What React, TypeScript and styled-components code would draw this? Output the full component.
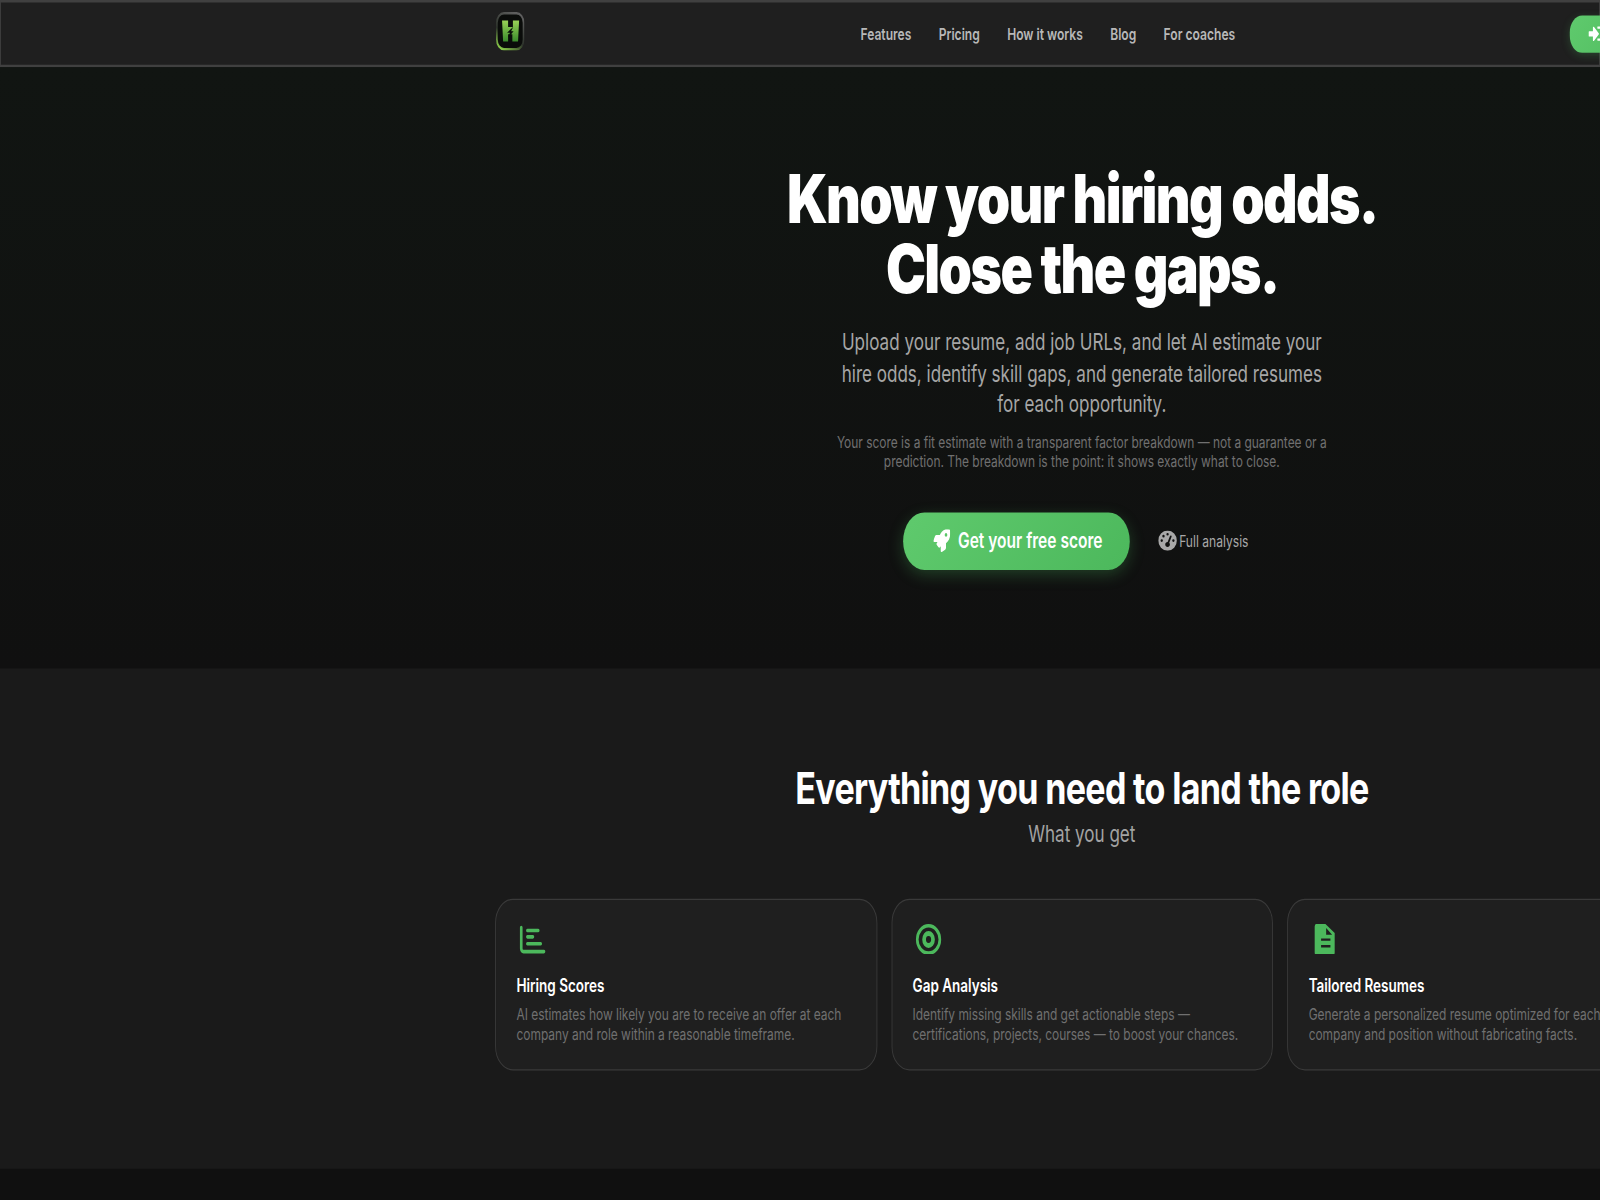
import React from "react";
import styled, { createGlobalStyle } from "styled-components";
import { FaRocket, FaSignInAlt } from "react-icons/fa";
import { FaGaugeHigh } from "react-icons/fa6";

const Global = createGlobalStyle`
  html, body { margin: 0; padding: 0; width: 100%; height: 100%; overflow: hidden; background: #101010; }
  * { box-sizing: border-box; }
`;

/* The reference is a 1800x1000 page non-uniformly resampled to 1600x1200. */
const Page = styled.div`
  width: 1800px;
  height: 1000px;
  overflow: hidden;
  transform: scale(0.8889, 1.2);
  transform-origin: 0 0;
  font-family: Inter, "Liberation Sans", sans-serif;
  background: #101010;
`;

const Nav = styled.header`
  height: 56px;
  background: #1f1f1f;
  border-style: solid;
  border-color: #404040;
  border-width: 2px 1px;
  display: flex;
  align-items: center;
  padding-left: 557px;
`;
const Logo = styled.svg`
  width: 32px;
  height: 32px;
  flex: none;
  margin-top: -4px;
`;
const NavLinks = styled.nav`
  display: flex;
  gap: 30.8px;
  margin: 0 0 1px 378px;
`;
const NavLink = styled.a`
  font-size: 13.6px;
  font-weight: 600;
  color: #b8b8b8;
  white-space: nowrap;
`;
const LoginButton = styled.button`
  flex: none;
  width: 120px;
  height: 31px;
  margin-left: 376px;
  border: 0;
  border-radius: 14px;
  background: linear-gradient(135deg, #5fca6d, #4cb85c);
  box-shadow: 0 2px 8px rgba(76, 184, 92, 0.25);
  color: #fff;
  display: flex;
  align-items: center;
  padding: 0 0 0 21px;
  font-size: 16px;
`;

const Hero = styled.section`
  height: 501px;
  background: linear-gradient(180deg, #111512 0%, #101010 100%);
  padding: 81px 0 0 558px;
`;
const Column = styled.div`
  width: 1318px;
  display: flex;
  flex-direction: column;
  align-items: center;
  text-align: center;
`;
const Title = styled.h1`
  margin: 0 0 20px;
  font-size: 56px;
  line-height: 58px;
  font-weight: 900;
  letter-spacing: -0.03em;
  color: #fff;
  transform: scaleX(1.077);
`;
const Lead = styled.p`
  margin: 0 0 10px;
  width: 545px;
  font-size: 19.2px;
  line-height: 25.6px;
  font-weight: 400;
  color: #a6a6a6;
`;
const Note = styled.p`
  margin: 0 0 34px;
  width: 600px;
  font-size: 13.45px;
  line-height: 16.67px;
  color: #707070;
`;
const Actions = styled.div`
  display: flex;
  align-items: center;
  gap: 16px;
  margin-left: 2px;
`;
const Cta = styled.button`
  width: 255px;
  height: 47.5px;
  border: 0;
  border-radius: 24px;
  padding: 0 0 0 4px;
  background: linear-gradient(135deg, #5fca6d, #4cb85c);
  box-shadow: 0 4px 14px rgba(76, 184, 92, 0.28);
  color: #fff;
  font: 600 17.5px Inter, "Liberation Sans", sans-serif;
  display: flex;
  align-items: center;
  justify-content: center;
  gap: 9px;
`;
const SecondaryLink = styled.a`
  display: flex;
  align-items: center;
  gap: 3px;
  padding: 0 16px;
  color: #a8a8a8;
  font-size: 13.6px;
  white-space: nowrap;
`;
const Gauge = styled(FaGaugeHigh)`
  width: 21px;
  height: 17px;
  flex: none;
`;

const Features = styled.section`
  height: 417px;
  background: #1a1a1a;
  padding: 81px 0 0 558px;
`;
const Heading = styled.h2`
  margin: 0 0 8px;
  font-size: 36.5px;
  line-height: 38px;
  font-weight: 700;
  letter-spacing: -0.02em;
  color: #fff;
  transform: scaleX(1.05);
`;
const Sub = styled.p`
  margin: 0;
  font-size: 19.2px;
  line-height: 22px;
  font-weight: 400;
  color: #a3a3a3;
`;
const Cards = styled.div`
  display: flex;
  gap: 16px;
  width: 1318px;
  margin: 43px 0 0 -2px;
`;
const Card = styled.article`
  flex: none;
  width: 429.6px;
  height: 143px;
  padding: 21px 23px;
  border: 1px solid #3a3a3a;
  border-radius: 20px;
  background: #1f1f1f;
  text-align: left;
`;
const CardIcon = styled.svg`
  display: block;
  height: 25.6px;
  width: 36px;
  color: #4cb85c;
  margin: -1.5px 0 16.5px;
`;
const CardTitle = styled.h3`
  margin: 0 0 6.3px;
  font-size: 15.2px;
  line-height: 19px;
  font-weight: 600;
  color: #fff;
`;
const CardText = styled.p`
  margin: 0;
  font-size: 13.45px;
  line-height: 17px;
  color: #707070;
  white-space: nowrap;
`;

const BarsIcon = () => (
  <CardIcon viewBox="0 0 36 25.6" fill="none" stroke="currentColor" strokeLinecap="round" strokeWidth="3">
    <path d="M5.4 3V20.5a2.5 2.5 0 0 0 2.5 2.5H31" />
    <path d="M12.3 5.4H24.5M12.3 10.7H18.5M12.3 16.5H27.3" />
  </CardIcon>
);
const TargetIcon = () => (
  <CardIcon viewBox="0 0 36 25.6" fill="none" stroke="currentColor">
    <ellipse cx="17.6" cy="12.9" rx="12.7" ry="11.4" strokeWidth="3" />
    <ellipse cx="17.6" cy="12.9" rx="5" ry="5" strokeWidth="4.2" />
  </CardIcon>
);
const FileIcon = () => (
  <CardIcon viewBox="0 0 36 25.6" fill="currentColor">
    <path
      transform="translate(2.2 0)"
      fillRule="evenodd"
      d="M6.8 0H16.9L27.3 7.5V23.8a2 2 0 0 1-2 2H6.8a2 2 0 0 1-2-2V2a2 2 0 0 1 2-2ZM17.7 3.3V8.9H24.4ZM12 12V14H22.5V12ZM12 17.6V19.6H22.5V17.6Z"
    />
  </CardIcon>
);

const features = [
  {
    Icon: BarsIcon,
    title: "Hiring Scores",
    lines: [
      "AI estimates how likely you are to receive an offer at each",
      "company and role within a reasonable timeframe.",
    ],
  },
  {
    Icon: TargetIcon,
    title: "Gap Analysis",
    lines: [
      "Identify missing skills and get actionable steps —",
      "certifications, projects, courses — to boost your chances.",
    ],
  },
  {
    Icon: FileIcon,
    title: "Tailored Resumes",
    lines: [
      "Generate a personalized resume optimized for each",
      "company and position without fabricating facts.",
    ],
  },
];

export default function App() {
  return (
    <Page>
      <Global />
      <Nav>
        <Logo viewBox="0 0 32 32">
          <defs>
            <linearGradient id="edge" x1="0.7" y1="0" x2="0.2" y2="1">
              <stop offset="0" stopColor="#5e5e5e" />
              <stop offset="0.6" stopColor="#2c322a" />
              <stop offset="1" stopColor="#86c648" />
            </linearGradient>
            <linearGradient id="letter" x1="0" y1="0" x2="0" y2="1">
              <stop offset="0" stopColor="#9ad257" />
              <stop offset="1" stopColor="#3a8a2c" />
            </linearGradient>
          </defs>
          <rect x="1" y="1" width="30" height="30" rx="8" fill="#0a0c0a" stroke="url(#edge)" strokeWidth="2" />
          <path d="M6.8 7H13.6V12.5H19V7H26L24.8 24.5H18.4V18.5H13.6V24.5H8Z" fill="url(#letter)" />
          <path d="M19.5 12.2L12.5 17.2H15.6L13.8 21.2L19.8 16H17Z" fill="#0a0c0a" />
        </Logo>
        <NavLinks>
          {["Features", "Pricing", "How it works", "Blog", "For coaches"].map((l) => (
            <NavLink key={l}>{l}</NavLink>
          ))}
        </NavLinks>
        <LoginButton aria-label="Sign in">
          <FaSignInAlt />
        </LoginButton>
      </Nav>
      <Hero>
        <Column>
          <Title>
            Know your hiring odds.
            <br />
            Close the gaps.
          </Title>
          <Lead>
            Upload your resume, add job URLs, and let AI estimate your hire odds, identify skill gaps, and generate
            tailored resumes for each opportunity.
          </Lead>
          <Note>
            Your score is a fit estimate with a transparent factor breakdown — not a guarantee or a prediction. The
            breakdown is the point: it shows exactly what to close.
          </Note>
          <Actions>
            <Cta>
              <FaRocket size={19} />
              Get your free score
            </Cta>
            <SecondaryLink>
              <Gauge preserveAspectRatio="none" />
              Full analysis
            </SecondaryLink>
          </Actions>
        </Column>
      </Hero>
      <Features>
        <Column>
          <Heading>Everything you need to land the role</Heading>
          <Sub>What you get</Sub>
          <Cards>
            {features.map(({ Icon, title, lines }) => (
              <Card key={title}>
                <Icon />
                <CardTitle>{title}</CardTitle>
                <CardText>
                  {lines[0]}
                  <br />
                  {lines[1]}
                </CardText>
              </Card>
            ))}
          </Cards>
        </Column>
      </Features>
    </Page>
  );
}
